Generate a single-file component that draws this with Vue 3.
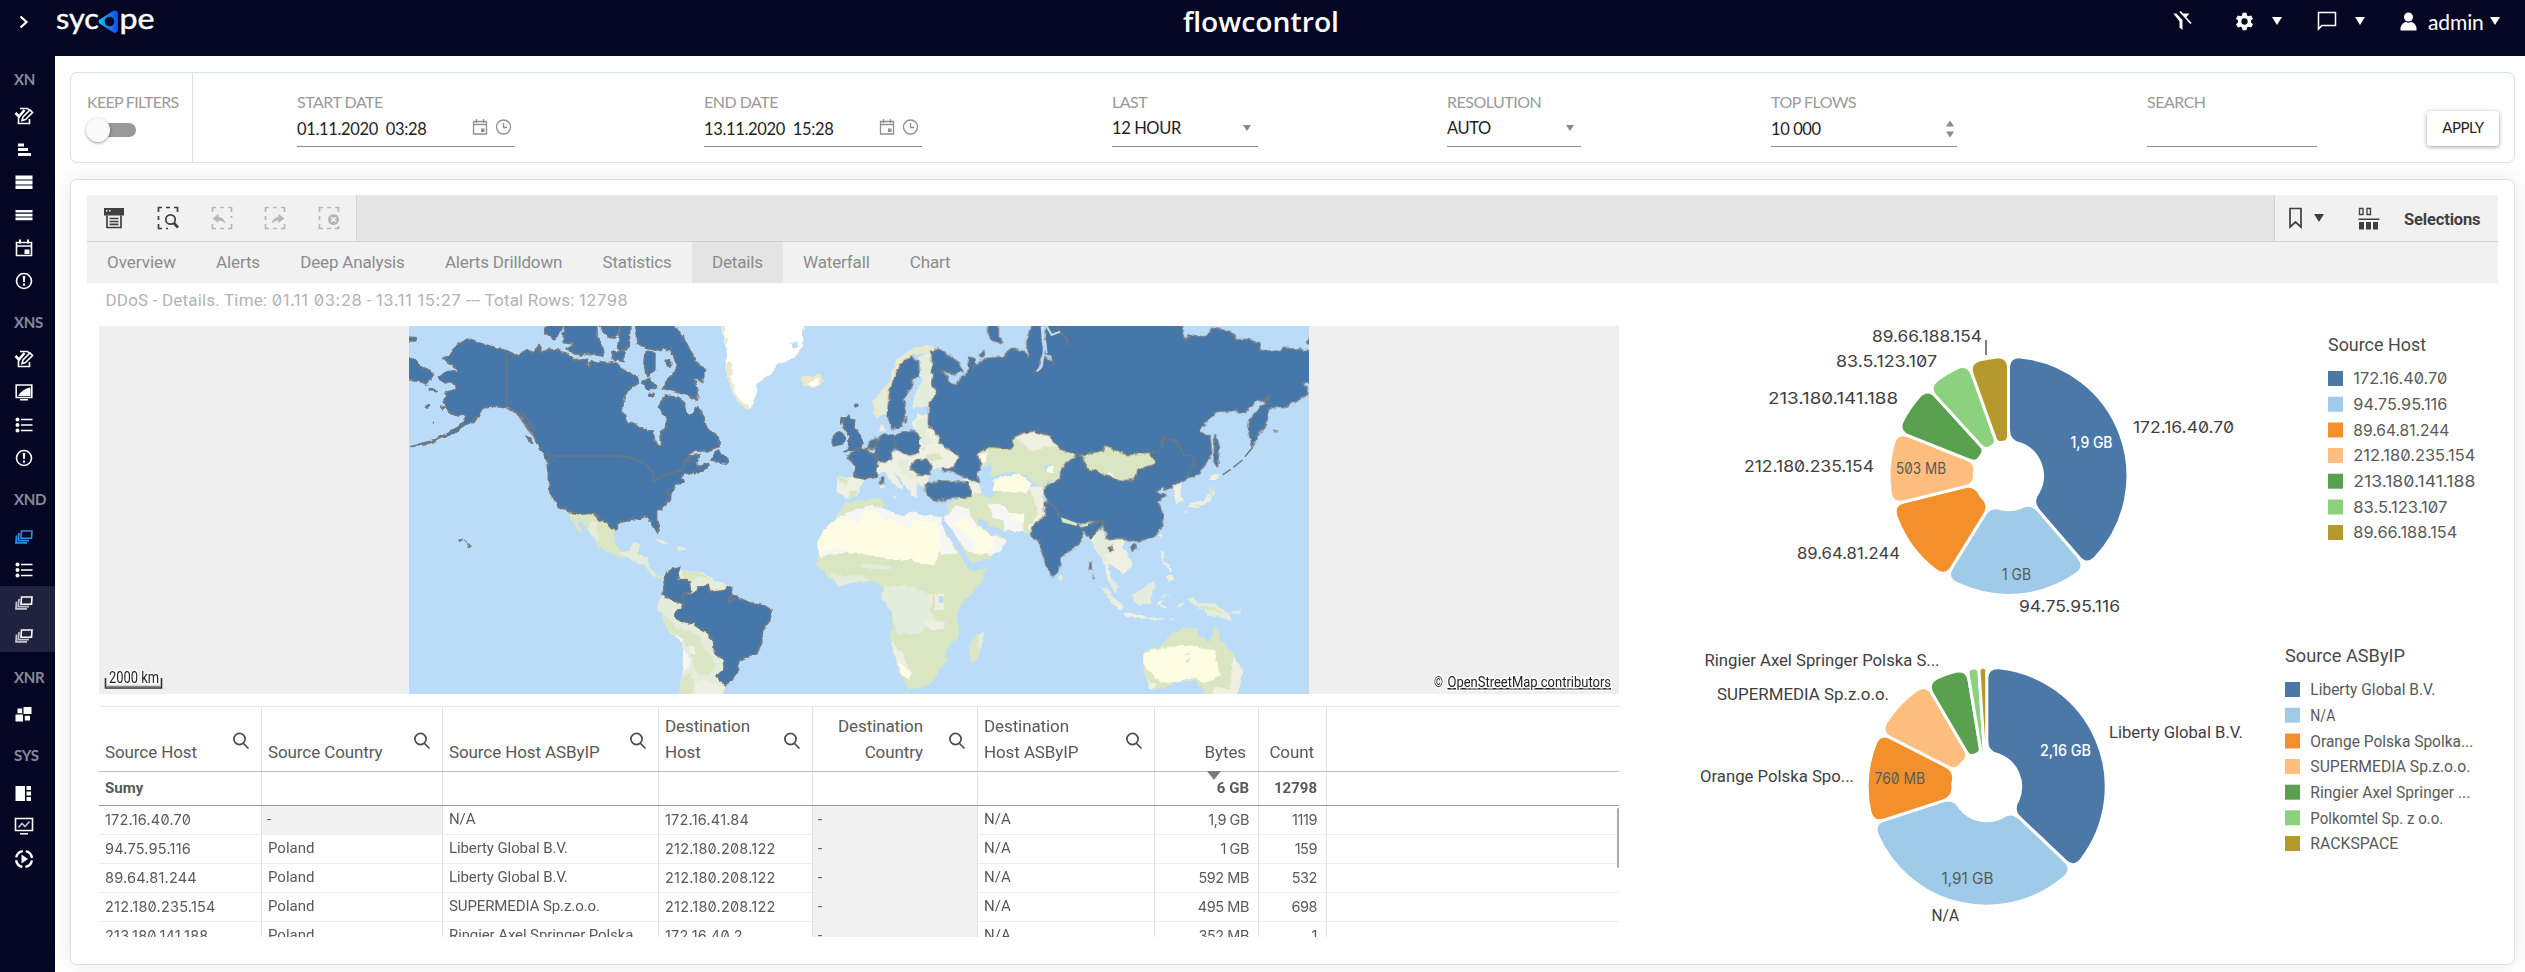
<script setup>
const sections = [
  { label: 'XN', items: ['edit', 'steps', 'rows', 'lines', 'calendar', 'alert'] },
  { label: 'XNS', items: ['edit', 'screen', 'list', 'alert'] },
  { label: 'XND', items: ['stack', 'list', 'stack', 'stack'] },
  { label: 'XNR', items: ['grid'] },
  { label: 'SYS', items: ['panel', 'monitor', 'play'] }
]
const tone = (section, i) => {
  if (section.label !== 'XND') return ''
  if (i === 0) return 'current'
  return i > 1 ? 'marked' : ''
}

const tabs = ['Overview', 'Alerts', 'Deep Analysis', 'Alerts Drilldown', 'Statistics', 'Details', 'Waterfall', 'Chart']

const columns = [
  { lines: ['Source Host'], search: true },
  { lines: ['Source Country'], search: true },
  { lines: ['Source Host ASByIP'], search: true },
  { lines: ['Destination', 'Host'], search: true },
  { lines: ['Destination', 'Country'], search: true, right: true },
  { lines: ['Destination', 'Host ASByIP'], search: true },
  { lines: ['Bytes'], right: true, sorted: true },
  { lines: ['Count'], right: true },
  { lines: [] }
]
const totals = ['Sumy', '', '', '', '', '', '6 GB', '12798', '']
const rows = [
  ['172.16.40.70', '-', 'N/A', '172.16.41.84', '-', 'N/A', '1,9 GB', '1119', ''],
  ['94.75.95.116', 'Poland', 'Liberty Global B.V.', '212.180.208.122', '-', 'N/A', '1 GB', '159', ''],
  ['89.64.81.244', 'Poland', 'Liberty Global B.V.', '212.180.208.122', '-', 'N/A', '592 MB', '532', ''],
  ['212.180.235.154', 'Poland', 'SUPERMEDIA Sp.z.o.o.', '212.180.208.122', '-', 'N/A', '495 MB', '698', ''],
  ['213.180.141.188', 'Poland', 'Ringier Axel Springer Polska', '172.16.40.2', '-', 'N/A', '352 MB', '1', '']
]

const palette = ['#4c78a8', '#9fcae8', '#f4902c', '#ffbe7d', '#59a14e', '#8bd17e', '#b6992d']

// Ring sector with softened corners; angles are in degrees, clockwise from 12 o'clock.
function sector(cx, cy, r0, r1, from, to) {
  const a0 = (from * Math.PI) / 180
  const a1 = (to * Math.PI) / 180
  const span = a1 - a0
  const co = Math.min(12, (span * r1) / 2.1)
  const ci = Math.min(12, (span * r0) / 2.1)
  const p = (r, a) => `${(cx + r * Math.sin(a)).toFixed(1)} ${(cy - r * Math.cos(a)).toFixed(1)}`
  const large = span > Math.PI ? 1 : 0
  return `M${p(r0 + ci, a0)}L${p(r1 - co, a0)}Q${p(r1, a0)} ${p(r1, a0 + co / r1)}` +
    `A${r1} ${r1} 0 ${large} 1 ${p(r1, a1 - co / r1)}Q${p(r1, a1)} ${p(r1 - co, a1)}` +
    `L${p(r0 + ci, a1)}Q${p(r0, a1)} ${p(r0, a1 - ci / r0)}` +
    `A${r0} ${r0} 0 ${large} 0 ${p(r0, a0 + ci / r0)}Q${p(r0, a0)} ${p(r0 + ci, a0)}Z`
}
function sectors(cx, cy, stops) {
  return stops.slice(1).map((to, i) => ({ d: sector(cx, cy, 34, 119.5, stops[i], to), fill: palette[i] }))
}

const charts = [
  {
    title: { t: 'Source Host', x: 2328, y: 351, w: 98 },
    arcs: sectors(2008.5, 475.8, [0, 139.3, 211.8, 256, 291.8, 317.5, 340.3, 360]),
    tick: 'M1986 340V355',
    labels: [
      { t: '89.66.188.154', x: 1872, y: 342, w: 110 },
      { t: '83.5.123.107', x: 1836, y: 367, w: 101 },
      { t: '213.180.141.188', x: 1768, y: 404, w: 130 },
      { t: '212.180.235.154', x: 1744, y: 472, w: 130 },
      { t: '89.64.81.244', x: 1797, y: 559, w: 103 },
      { t: '94.75.95.116', x: 2019, y: 612, w: 101 },
      { t: '172.16.40.70', x: 2133, y: 433, w: 101 }
    ],
    values: [
      { t: '1,9 GB', x: 2070.5, y: 448, w: 42, light: true },
      { t: '503 MB', x: 1896, y: 474, w: 50 },
      { t: '1 GB', x: 2002, y: 580, w: 29 }
    ],
    swatchX: 2328,
    legend: [
      { t: '172.16.40.70', y: 378.5, w: 94 },
      { t: '94.75.95.116', y: 404.2, w: 94 },
      { t: '89.64.81.244', y: 430, w: 96 },
      { t: '212.180.235.154', y: 455.5, w: 122 },
      { t: '213.180.141.188', y: 481.2, w: 122 },
      { t: '83.5.123.107', y: 507, w: 94 },
      { t: '89.66.188.154', y: 532.5, w: 104 }
    ]
  },
  {
    title: { t: 'Source ASByIP', x: 2285, y: 662, w: 120 },
    arcs: sectors(1986.7, 786.7, [0, 133.5, 252, 297, 329.7, 350.6, 356.2, 360]),
    tick: '',
    labels: [
      { t: 'Ringier Axel Springer Polska S...', x: 1704.5, y: 666, w: 235 },
      { t: 'SUPERMEDIA Sp.z.o.o.', x: 1717, y: 700, w: 172 },
      { t: 'Orange Polska Spo...', x: 1700, y: 782, w: 154 },
      { t: 'Liberty Global B.V.', x: 2109, y: 738, w: 134 },
      { t: 'N/A', x: 1931.5, y: 921, w: 27.5 }
    ],
    values: [
      { t: '2,16 GB', x: 2040, y: 756, w: 51, light: true },
      { t: '760 MB', x: 1874.5, y: 784, w: 50.5 },
      { t: '1,91 GB', x: 1941.5, y: 884, w: 52 }
    ],
    swatchX: 2285,
    legend: [
      { t: 'Liberty Global B.V.', y: 689.5, w: 125 },
      { t: 'N/A', y: 715.2, w: 25 },
      { t: 'Orange Polska Spolka...', y: 741, w: 163 },
      { t: 'SUPERMEDIA Sp.z.o.o.', y: 766.5, w: 160 },
      { t: 'Ringier Axel Springer ...', y: 792.2, w: 160 },
      { t: 'Polkomtel Sp. z o.o.', y: 817.8, w: 133 },
      { t: 'RACKSPACE', y: 843.5, w: 88 }
    ]
  }
]
const numeric = (t) => /^[\d.,]+( [GM]B)?$/.test(t)
const address = (t) => /^\d+\.\d+\.\d+\.\d+$/.test(t)
</script>

<template>
  <div class="app">
    <header class="topbar">
      <svg class="chev" width="10" height="14" viewBox="0 0 10 14"><path d="M1.500 1.500L7.500 7L1.500 12.500" /></svg>
      <svg class="logo" width="102" height="40" viewBox="0 0 102 40">
        <defs>
          <linearGradient id="prism" x1="0" x2="1"><stop offset="0" stop-color="#12c4f5" /><stop offset="1" stop-color="#1747f2" /></linearGradient>
        </defs>
        <text x="1" y="21" textLength="43" lengthAdjust="spacingAndGlyphs">syc</text>
        <path d="M44.500 11.500Q42.500 13.500 44.500 15.500L58.500 24.500Q63 25.500 63 21V6Q63 1.500 58.500 2.800Z" fill="url(#prism)" />
        <circle cx="54.500" cy="13.500" r="4.800" fill="#060824" />
        <text x="64.500" y="21" textLength="35" lengthAdjust="spacingAndGlyphs">pe</text>
      </svg>
      <svg class="product" width="160" height="40" viewBox="0 0 160 40"><text x="1" y="26.500" textLength="156" lengthAdjust="spacingAndGlyphs">flowcontrol</text></svg>
      <div class="tools">
        <svg class="t-filter" width="20" height="20" viewBox="0 0 20 20"><path d="M.500 2.500H3.500L9.500 9V12V19L6.500 16.500V10.500ZM9 2.500H16.500L12.500 7Z" fill="#fff" /><path d="M7 .500L18 12.500" stroke="#fff" stroke-width="1.700" /></svg>
        <svg class="t-gear" width="19" height="19" viewBox="0 0 24 24"><path fill="#fff" fill-rule="evenodd" d="M9.500 1h5l.6 3.300 2 1.200 3.200-1.200 2.500 4.300-2.600 2.200v2.400l2.600 2.200-2.500 4.300-3.200-1.200-2 1.200-.6 3.300h-5l-.6-3.300-2-1.200-3.200 1.200-2.500-4.300 2.600-2.200v-2.400L1.200 8.600l2.500-4.300 3.200 1.200 2-1.200ZM12 8a4 4 0 1 0 0 8a4 4 0 1 0 0-8Z" /></svg>
        <i class="down a1"></i>
        <svg class="t-chat" width="20" height="20" viewBox="0 0 20 20"><path d="M1.500 18V1.500H18.500V14.500H4.800Z" fill="none" stroke="#fff" stroke-width="1.500" /></svg>
        <i class="down a2"></i>
        <svg class="t-user" width="17" height="19" viewBox="0 0 17 19"><circle cx="8.500" cy="5" r="4.500" fill="#fff" /><path d="M.500 18.500V15.500Q2 10.500 6 10Q8.500 11.500 11 10Q15 10.500 16.500 15.500V18.500Z" fill="#fff" /></svg>
        <span class="user">admin</span>
        <i class="down a3"></i>
      </div>
    </header>

    <div class="body">
      <nav class="side">
        <section v-for="s in sections" :key="s.label">
          <h6>{{ s.label }}</h6>
          <div v-for="(icon, i) in s.items" :key="i" class="nav" :class="tone(s, i)">
            <svg width="20" height="20" viewBox="0 0 20 20">
              <g v-if="icon === 'edit'" class="ln"><path d="M4.500 11.500V17.500H15.500V13M6 2.500H13.500L15 4" /><path d="M1.500 7L5 10.500L10.500 4" class="fat" /><path d="M8 14.500L9 11L16 4L18.500 6.500L11.500 13.500Z" /></g>
              <g v-else-if="icon === 'steps'"><path d="M4 4.500h6v3H4zM4 9h10v3H4zM4 14h13v3H4z" /></g>
              <g v-else-if="icon === 'rows'"><path d="M1.500 3.500h17v4h-17zM1.500 8.500h17v4h-17zM1.500 13.500h17v3.500h-17z" /></g>
              <g v-else-if="icon === 'lines'"><path d="M1.500 5h17v2.600h-17zM1.500 8.800h17v2.600h-17zM1.500 12.600h17v2.600h-17z" /></g>
              <g v-else-if="icon === 'calendar'"><path d="M2.500 4.500H17.500V17.500H2.500ZM2.500 8H17.500" class="ln" /><path d="M5 1.500h2v4H5zM13 1.500h2v4h-2zM10.500 11.500h5V16h-5z" /></g>
              <g v-else-if="icon === 'alert'"><circle cx="10" cy="10" r="7.500" class="ln" /><path d="M8.700 5h2.600l-.5 6h-1.600zM8.900 12.600h2.200v2.200H8.900z" /></g>
              <g v-else-if="icon === 'screen'"><path d="M2.200 3H17.800V15.500H2.200Z" class="ln" /><path d="M4 14Q8 7 16.500 5.500V14ZM6 17h8v1.500H6z" /></g>
              <g v-else-if="icon === 'list'"><circle cx="3.500" cy="4.500" r="2" /><circle cx="3.500" cy="10" r="2" /><circle cx="3.500" cy="15.500" r="2" /><path d="M7 3.800h11.500v1.500H7zM7 9.300h11.500v1.500H7zM7 14.800h11.500v1.500H7z" /></g>
              <g v-else-if="icon === 'stack'" class="ln"><path d="M7.500 4H18L17.500 11.300H7Z" /><path d="M5 6L4.300 13.600H15M2.500 8.500L2 15.800H13" class="thin" /></g>
              <g v-else-if="icon === 'grid'"><path d="M3.500 4.500h4.700v4.700H3.500zM9.500 3h8v7h-8zM1.500 10.500H9v7H1.500zM10.800 11.700H16v4.800h-5.200z" /></g>
              <g v-else-if="icon === 'panel'"><path d="M1.500 3h9.500v15H1.500zM12.500 3h4.500v4h-4.500zM12.500 8.500h4.500v4h-4.500zM12.500 14h4.500v4h-4.500z" /></g>
              <g v-else-if="icon === 'monitor'" class="ln"><path d="M1.500 2.500H18.500V14.500H1.500ZM6 17.700H14" /><path d="M4.500 11.500L8 7.500L11 10.500L15.500 5.500" class="thin" /></g>
              <g v-else><circle cx="10" cy="10" r="8" class="ln dash" /><path d="M7.500 5.500L14 10L7.500 14.500Z" /></g>
            </svg>
          </div>
        </section>
      </nav>

      <main class="content">
        <section class="card filters">
          <div class="keep"><label>KEEP FILTERS</label><span class="toggle"><i></i></span></div>
          <div class="field w-date"><label>START DATE</label>
            <div class="value">01.11.2020&nbsp; 03:28
              <svg class="dt" width="40" height="18" viewBox="0 0 40 18"><path d="M1.500 3.500H14.500V16H1.500ZM1.500 6.500H14.500M4.500 1V5M11.500 1V5" /><path d="M9 10.500h3.500V14H9z" class="fill" /><circle cx="31.500" cy="9" r="7" /><path d="M31.500 5V9.500H35" /></svg>
            </div>
          </div>
          <div class="field w-date"><label>END DATE</label>
            <div class="value">13.11.2020&nbsp; 15:28
              <svg class="dt" width="40" height="18" viewBox="0 0 40 18"><path d="M1.500 3.500H14.500V16H1.500ZM1.500 6.500H14.500M4.500 1V5M11.500 1V5" /><path d="M9 10.500h3.500V14H9z" class="fill" /><circle cx="31.500" cy="9" r="7" /><path d="M31.500 5V9.500H35" /></svg>
            </div>
          </div>
          <div class="field w-last"><label>LAST</label><div class="value up">12 HOUR<i class="down small"></i></div></div>
          <div class="field w-res"><label>RESOLUTION</label><div class="value up">AUTO<i class="down small"></i></div></div>
          <div class="field w-top"><label>TOP FLOWS</label>
            <div class="value">10 000<svg class="spin" width="10" height="18" viewBox="0 0 10 18"><path d="M1 6.500L5 .500L9 6.500ZM1 11.500L5 17.500L9 11.500Z" /></svg></div>
          </div>
          <div class="field w-search"><label>SEARCH</label><div class="value"></div></div>
          <button class="apply">APPLY</button>
        </section>

        <section class="card board">
          <div class="toolbar">
            <div class="group first">
              <svg width="24" height="24" viewBox="0 0 24 24"><path d="M2 2h20v7.500h-20z" class="dk" /><path d="M4 4h1.500v1.500H4zM7 4h1.500v1.500H7z" fill="#f1f1f1" /><path d="M5 9.500V21.500H19V9.500M7.500 12.500H16.500M7.500 15.500H16.500M7.500 18.300H16.500" class="st" /></svg>
              <svg width="24" height="24" viewBox="0 0 24 24"><path d="M2.500 6V1.500H6M10 1.500H14M18 1.500H21.500V6M2.500 10V14M2.500 18V22.500H6M10 22.500h2" class="st" /><circle cx="14.500" cy="13.500" r="4.700" class="st" /><path d="M17.800 17L22 21.500" class="st wide" /></svg>
              <svg class="off" width="24" height="24" viewBox="0 0 24 24"><path d="M2.500 6V1.500H6M10 1.500H14M18 1.500H21.500V6M2.500 18V22.500H6M10 22.500H14M18 22.500H21.500V18M21.500 10V12" class="st" /><path d="M2.500 12.500L8.500 8V11Q14 11.500 15.500 17.500Q12.500 14.500 8.500 14.500V17Z" class="dk" /></svg>
              <svg class="off" width="24" height="24" viewBox="0 0 24 24"><path d="M2.500 6V1.500H6M10 1.500H14M18 1.500H21.500V6M2.500 18V22.500H6M10 22.500H14M18 22.500H21.500V18M2.500 10V14" class="st" /><path d="M21.500 12.500L15.500 8V11Q10 11.500 8.500 17.500Q11.500 14.500 15.500 14.500V17Z" class="dk" /></svg>
              <svg class="off" width="24" height="24" viewBox="0 0 24 24"><path d="M2.500 6V1.500H6M10 1.500H14M18 1.500H21.500V6M2.500 10V14M2.500 18V22.500H6M10 22.500H14M18 22.500H21.500V20" class="st" /><circle cx="16.500" cy="13.500" r="5.500" class="dk" /><path d="M14.300 11.300L18.700 15.700M18.700 11.300L14.300 15.700" stroke="#f1f1f1" stroke-width="1.800" /></svg>
            </div>
            <div class="group last">
              <svg class="bm" width="16" height="22" viewBox="0 0 16 22"><path d="M2 1.500H13V20L7.500 15L2 20Z" class="st" /></svg>
              <i class="down dark"></i>
              <svg class="sel" width="24" height="24" viewBox="0 0 24 24"><path d="M2.500 2.500H6V8.500H2.500ZM10 2.500H13.500V8.500H10Z" class="st thin" /><path d="M1.500 12.500h21v1.500h-21zM2 16h5v7.500H2zM9 16h5v7.500H9zM16 16h5v7.500h-5z" class="dk" /></svg>
              <b>Selections</b>
            </div>
          </div>
          <div class="tabs"><span v-for="t in tabs" :key="t" :class="{ on: t === 'Details' }">{{ t }}</span></div>
          <p class="caption">DDoS - Details. Time: <span>01.11 03:28</span> - <span>13.11 15:27</span> --- Total Rows: <span>12798</span></p>

          <div class="split">
            <div class="data">
              <svg class="map" width="1520" height="368" viewBox="99 326 1520 368">
                <defs>
                  <clipPath id="tiles"><rect x="409" y="326" width="900" height="368" /></clipPath>
                  <filter id="coast" x="-5%" y="-5%" width="110%" height="110%"><feTurbulence type="fractalNoise" baseFrequency="0.160" numOctaves="2" seed="4" /><feDisplacementMap in="SourceGraphic" scale="5" xChannelSelector="R" yChannelSelector="G" /></filter>
                </defs>
                <rect x="99" y="326" width="1520" height="368" fill="#efefef" />
                <g clip-path="url(#tiles)">
                  <rect x="409" y="326" width="900" height="368" fill="#badcf8" />
                  <g filter="url(#coast)">
                    <g transform="translate(400 320) scale(.3333)">
                      <path class="ice" d="M968 10H1212L1205 80L1185 115L1135 130L1110 165L1072 190L1070 220L1050 268L1020 252L1000 220L980 170L975 130L985 100L970 60Z" />
                      <path class="sand" d="M960 15L975 20L975 50L985 60L982 75L972 65ZM975 130L990 122L1000 160L992 168L1002 215L1025 245L1050 262L1048 268L1020 254L1000 220L980 170ZM1200 168L1215 172L1260 162L1273 185L1240 205L1215 198Z" />
                      <path fill="#badcf8" d="M1168 72L1190 65L1200 80L1180 82Z" />
                      <path fill="#fff" d="M1225 188L1255 178L1258 192L1235 200Z" />
                      <path class="veg" d="M500 573L540 583L580 580L598 600L613 598L632 625L647 630L645 665L660 692L690 692L700 670L720 668L715 705L745 712L750 745L770 765L790 768L785 775L765 772L740 755L735 740L690 718L650 708L590 680L585 655L555 622L530 590L548 640L535 635L515 600Z" />
                      <path class="pale" d="M570 600L595 605L590 640L600 660L590 665L565 630ZM655 695L690 692L700 670L720 668L715 705L745 712L750 745L770 765L765 772L735 740L690 718Z" />
                      <path class="pale" d="M760 656L785 660L810 674L795 676L775 664ZM832 682H852L860 690H835ZM875 690h6v4h-6z" />
                      <path class="pale" d="M838 750L880 755L910 758L940 780L985 795L968 815L930 815L925 795L890 805L880 823L870 815L868 783L835 775Z" />
                      <path class="veg" d="M845 752L905 760L925 778L900 772L880 785L850 770Z" />
                      <path class="pale" d="M785 822L825 845L850 850L822 885L850 912L885 905L922 935L940 955L943 1000L970 1020L972 1045L948 1068L977 1098L960 1135H835L845 1070L850 1000L848 965L810 940L790 895L770 865Z" />
                      <path class="veg" d="M775 870L800 890L830 925L865 930L900 950L905 975L925 1000L950 1030L935 1060L905 1070L885 1050L870 990L850 960L810 935L790 895ZM835 1125L848 1070L870 1060L885 1090L870 1130Z" />
                      <path class="snow" d="M850 990L868 1010L870 1040L850 1055ZM830 945L855 960L845 970Z" />
                      <path class="sandy" d="M862 975L885 980L890 1000L870 1000ZM885 1085L920 1080L970 1105L960 1130H885Z" />
                      <path class="sandy" d="M1312 470L1365 472L1400 478L1380 500L1370 525L1340 540L1310 515Z" />
                      <path class="veg" d="M1312 472L1345 474L1340 490L1320 490ZM1350 515L1372 510L1366 528L1345 535Z" />
                    </g>
                    <g transform="translate(860 320) scale(.3333)">
                      <path class="veg" d="M-45 548L-20 545L0 540L70 533L75 550L70 565L95 575L130 590L150 575L200 585L240 590L250 620L270 660L300 700L320 745L345 752L378 745L370 780L330 825L300 855L290 890L298 950L262 985L260 1020L240 1050L215 1090L180 1103L145 1108L125 1070L110 1020L88 960L98 920L95 880L68 840L65 800L40 783L0 785L-65 797L-100 765L-130 735L-125 700L-130 665L-105 625L-75 595Z" />
                      <path class="snow" d="M-128 665L-105 625L-75 598L-30 575L20 558L70 560L95 575L130 590L150 575L200 585L240 592L250 620L270 660L290 700L245 705L240 690L-60 700L-120 710Z" />
                      <path class="cream" d="M-128 668L-100 620L-70 600L0 605L15 570L50 570L70 605L100 600L150 630L160 600L230 605L245 690L220 735L180 730L150 720L90 720L0 700L-60 685L-125 695Z" />
                      <path class="pale" d="M70 800L110 795L160 800L220 825L210 880L230 900L190 930L170 945L110 940L95 880L68 840ZM-95 755L-50 770L0 765L40 783L0 785L-65 797ZM0 735L80 735L100 750L20 745Z" />
                      <path class="sandy" d="M225 825L255 820L250 870L225 870ZM190 900L255 905L250 930L200 925ZM90 960L110 1020L125 1070L155 1060L115 985Z" />
                      <path class="cream" d="M115 1025L155 1060L145 1080L125 1060Z" />
                      <path fill="#badcf8" d="M232 832L252 830L250 848L238 850Z" />
                      <path class="veg" d="M373 930L368 965L350 1025L330 1025L328 995L335 955L355 945Z" />
                      <path class="pale" d="M373 930L368 965L355 990L348 975L358 945Z" />
                      <path class="veg" d="M262 585L265 545L330 530L350 510L370 520L390 535L410 515L470 500L550 500L550 550L555 590L520 640L500 637L430 630L420 625L380 615L350 590L360 625L400 635L442 660L420 695L365 720L325 735L300 680L250 605Z" />
                      <path class="snow" d="M250 600L290 555L325 570L335 600L380 640L442 660L420 695L400 705L345 700L300 680L270 635ZM385 555L420 548L450 580L490 585L490 635L435 632L430 600L400 595Z" />
                      <path class="cream" d="M275 610L320 590L345 625L400 640L400 690L365 700L335 695L350 665L315 640ZM400 480L480 460L515 490L500 520L440 515L400 515ZM450 590L490 580L490 605L455 600Z" />
                      <path class="veg" d="M290 650L325 705L365 705L325 735L300 690ZM350 400L385 380L460 380L460 350L520 332L575 350L595 385L648 405L600 450L590 480L550 500L520 490L500 465L440 455L400 470L370 440Z" />
                      <path class="sandy" d="M350 400L380 400L378 430L355 425ZM455 350L520 332L575 350L595 385L550 375L545 390L510 390L485 370ZM505 500L550 500L550 550L555 590L520 640L505 620L535 580L525 545ZM300 470L360 490L365 520L335 520L325 488Z" />
                      <path class="cream" d="M555 440L585 438L582 455L560 455ZM352 408L378 405L375 430Z" />
                      <path fill="#badcf8" d="M367 445L395 435L398 450L383 470L405 520L390 535L368 525L372 490ZM550 442L570 432L575 438L552 446ZM555 485L580 478L578 485Z" />
                      <path fill="#badcf8" d="M355 595L375 600L400 630L425 630L430 645L395 645L365 620ZM215 470L240 450L300 470L325 488L245 483L215 490Z" />
                      <path class="veg" d="M660 405L735 378L800 400L868 398L890 430L835 450L825 480L780 483L720 460L680 445Z" />
                      <path class="snow" d="M715 462L735 465L755 460L762 468L740 475Z" />
                      <path class="sandy" d="M668 640L690 655L720 620L740 655L795 655L790 685L815 720L812 745L790 762L770 745L745 735L750 765L775 800L770 820L750 795L738 760L735 730L715 700L700 670Z" />
                      <path class="pale" d="M720 620L740 655L770 660L760 690L735 700L740 730L715 700L700 670ZM750 765L775 800L770 820L750 795ZM600 765L610 775L602 785L595 775Z" />
                      <path class="pale" d="M715 795L745 810L790 860L785 872L760 855L735 820ZM815 825L850 805L880 783L885 800L870 850L830 855ZM980 835L1000 835L1010 850L1040 845L1080 860L1105 880L1120 905L1080 890L1040 890L1035 870L1000 855ZM1112 875L1132 873L1142 865L1137 879L1119 881Z" />
                      <path class="sandy" d="M760 840L790 862L785 872L765 858ZM790 878L845 885L870 898L800 888ZM890 845L915 840L900 852L920 862L908 865L896 855L891 865ZM902 695L912 700V720L934 745V755L909 730ZM915 770L940 765L942 783L930 785ZM898 640L908 638L905 655ZM870 895h40v4h-40zM925 900l18-5v5l-16 5zM900 826h32v3h-32zM955 853h14v4h-14z" />
                      <path class="veg" d="M1010 852L1060 862L1090 880L1040 870ZM850 1005L860 990L905 980L930 945L980 920L1015 928L1015 945L1050 970L1065 915L1085 960L1120 1000L1147 1050L1130 1130L1040 1130L1025 1105L1000 1080L960 1085L910 1105L865 1105L850 1050Z" />
                      <path class="cream" d="M850 1005L865 992L915 985L940 978L1000 978L1030 988L1065 990L1070 1030L1080 1065L1040 1090L1000 1075L960 1085L905 1090L870 1055L850 1035Z" />
                      <path class="veg" d="M975 1022L995 1015L985 1030ZM972 998h18v5h-18z" />
                      <path class="sandy" d="M1120 1010L1147 1050L1130 1130H1045L1070 1100L1110 1110ZM865 1080L885 1095V1105H865Z" />
                      <path class="sandy" d="M1055 500L1062 520L1050 545L1015 560L985 565L990 550L1030 540L1045 525ZM1060 462L1085 465L1065 480L1048 480ZM972 567L984 570L978 582ZM935 495L965 490L962 510L968 545L950 552L945 525Z" />
                      <path class="veg" d="M1048 505L1060 505L1058 525L1048 535ZM995 555L1020 548L1015 558Z" />
                      <path class="beige" d="M40 240L85 190L110 120L150 90L215 75L225 90L190 100L150 105L120 140L90 200L85 280L50 295L40 270Z" />
                      <path class="pale" d="M178 110L215 95L218 190L230 220L208 258L160 265L160 225L185 190ZM45 245L75 215L85 280L60 285Z" />
                      <path class="sandy" d="M62 312L74 317L76 337L58 335ZM155 310L175 280L205 285L210 310L235 345L240 370L295 405L285 445L215 445L208 420L210 465L195 500L170 490L170 535L150 520L125 480L95 450L130 500L125 510L90 480L75 455L55 460L45 430L95 420L95 392L150 405L178 390L175 345ZM60 495h10v10h-10zM95 525l15 2-5 5z" />
                      <path class="pale" d="M160 305L200 290L208 325L190 345L225 370L190 375L175 340ZM110 415L150 420L140 440L160 470L150 480L115 440Z" />
                      <path class="veg" d="M195 410L235 395L245 420L215 425ZM180 380L200 385L190 395Z" />
                    </g>
                  </g>
                  <g filter="url(#coast)" class="blue">
                    <g transform="translate(400 320) scale(.3333)">
                      <path d="M128 118L150 105L165 80L203 57L235 68L270 78L320 92L355 108L385 90L400 100L417 75L425 98L445 88L470 90L500 100L520 122L560 118L568 145L575 122L610 130L635 125L650 130L670 150L700 165L718 175L715 190L690 205L672 235L667 275L685 305L715 318L740 330L760 333L762 360L778 380L785 375L782 335L800 320L800 295L785 275L775 262L795 225L825 228L850 245L857 275L870 288L885 275L893 260L910 290L920 325L955 352L958 380L930 392L880 394L852 425L868 412L890 402L900 405L890 425L895 440L925 430L928 440L885 463L882 455L850 463L845 478L850 488L825 497L810 520L808 545L770 578L770 600L777 620L772 637L760 620L752 598L735 590L705 600L695 597L665 603L650 615L647 630L632 625L613 598L598 600L580 580L540 583L500 573L475 557L450 518L445 480L445 420L425 395L408 365L390 330L365 290L335 268L315 263L275 258L250 262L235 285L205 310L170 335L130 352L105 365L70 372L35 380L60 372L110 358L150 335L180 318L198 290L170 282L150 283L140 262L132 240L140 215L170 207L165 190L130 188L118 172L135 158L173 155L160 135Z" />
                      <path d="M433 40L445 10H492L480 40L462 58L450 45ZM490 45L495 10H590L592 50L605 75L610 110L575 100L540 108L495 85L520 72L490 68ZM595 10H655V45L640 55L610 40ZM660 10H690L688 80L665 95L652 85L660 40ZM703 10H815L850 50L870 90L885 120L917 150L905 185L880 175L895 210L893 240L860 225L825 215L790 205L795 185L830 150L825 110L800 85L770 90L735 85L712 70ZM735 95L765 100L765 150L740 170L732 130ZM635 95H672V125L640 118ZM725 185L745 175L770 205L745 210ZM750 218L762 222L758 230L749 228ZM795 120L812 122L812 138L798 138Z" />
                      <path d="M935 420L955 390L962 402L980 412L982 430L955 425ZM20 105L75 145L103 162L80 192L50 180L20 180ZM20 50L46 53L44 63H20ZM88 205l22 6-4 4-18-4zM78 257h8v4h-8zM122 258l14 3-8 6zM218 295l16-8-8 20-10 2zM378 345L392 355L395 370L386 360ZM175 659h8v4h-8zM192 664l8 6M204 671l10 10-8 2zM98 305l7 6" />
                      <path d="M1335 290L1352 285L1350 300L1365 300L1362 320L1378 345L1390 368L1380 388L1335 395L1350 380L1340 365L1352 350L1335 330L1330 310ZM1300 348L1322 335L1335 350L1328 372L1300 378ZM1368 252l4 6-5 6zM1324 292l8-4-4 20-6 0zM1343 410L1365 412L1375 395L1395 385L1415 400L1440 410L1430 430L1428 470L1400 478L1365 472L1367 440Z" />
                      <path d="M840 738L832 770L838 778L868 783L872 815L852 820L850 850L825 845L785 820L797 795L793 772L815 748ZM852 820L875 823L893 812L890 800L905 802L925 793L930 817L968 812L990 798L1002 828L1050 848L1085 852L1113 870L1115 895L1088 930L1085 970L1067 1003L1035 1010L1015 1028L1012 1055L990 1085L977 1098L948 1068L972 1045L970 1020L943 1000L940 955L925 950L922 935L885 920L885 905L850 912L822 885L850 855ZM985 840L1000 825L1010 832L990 845Z" />
                    </g>
                    <g transform="translate(860 320) scale(.3333)">
                      <path d="M215 95L238 88L300 130L305 155L280 163L240 148L262 170L265 190L290 195L300 175L330 150L325 115L345 118V135L385 115L435 110L450 85L490 95L510 120L500 70L515 10L542 10L548 100L530 155L518 152L540 150L555 110L580 130L575 105L553 100L558 10L960 10L980 65L985 45L1020 50L1045 45L1055 25L1110 35L1130 60L1165 58L1198 72L1200 92L1260 95L1275 85L1320 88L1360 100V185L1325 187L1342 205L1340 225L1275 262L1240 262L1225 270L1220 310L1190 350L1178 382L1165 330L1170 300L1195 270L1230 228L1220 245L1195 237L1180 250L1155 278L1120 272L1065 275L1040 305L1018 335L1050 350L1055 400L1020 460L985 475L980 440L1005 418L970 400L945 360L910 355L895 395L868 400L800 403L735 378L730 390L655 405L595 385L575 348L520 332L460 350L455 385L385 380L350 400L365 435L350 455L358 487L330 475L275 455L245 450L285 445L295 405L240 370L235 345L205 310L208 255L230 220L218 190L217 130Z" />
                      <path d="M650 405L620 430L600 455L598 480L555 500L553 520L565 545L585 560L595 590L640 612L700 605L725 600L735 620L740 655L795 655L825 665L880 652L905 620L912 595L893 545L915 525L885 515L910 498L915 510L980 475L1005 418L970 400L945 360L910 355L895 395L868 400L890 430L835 450L825 480L780 483L720 460L680 445L660 405Z" />
                      <path d="M565 545L585 560L600 595L655 618L665 625L720 600L730 615L705 640L690 655L668 630L665 660L640 685L600 712L597 755L577 768L560 740L545 690L540 665L512 645L525 610L555 590L553 552ZM812 682L827 674L829 686L817 691ZM748 682l8-4v12l-6 2zM690 730l5-2-2 20-5 2zM697 765l6 14M1065 345L1078 380L1072 440L1062 435ZM360 98l12-4 3 10-8 7-8-5zM388 10H415V50L428 72L395 60L382 40ZM1340 60L1350 50V68H1340ZM245 443L265 450L252 458ZM62 475l8-4v16l-7 2zM133 298l8-4-4 12zM1240 330l14 6" />
                      <path d="M150 108L175 122L177 165L155 180V205L128 235L138 270L122 318L98 328L82 285L90 210L105 170L125 130ZM45 375L65 345L105 345L103 385L92 395L95 420L62 425L50 410ZM20 385L35 358L52 352L45 385ZM105 345L165 332L178 350L176 398L150 405L105 390ZM150 440L170 420L200 418L215 440L210 463L170 462ZM195 490L245 483L325 488L333 528L270 535L230 540L203 530ZM-37 410L-5 385L20 390L45 412L52 430L48 470L20 475L-15 472L-13 440Z" />
                    </g>
                  </g>
                  <g class="border">
                    <path transform="translate(400 320) scale(.3333)" d="M320 92V263L352 280L385 330L398 345M458 408H665L710 418L740 435L760 460L758 485L785 468L850 447L855 425L880 418M352 275L372 310L392 335M360 270L388 305L404 335M440 395L460 425M800 510L808 530" />
                    <path transform="translate(860 320) scale(.3333)" d="M565 30L600 40L622 55L620 80M585 10L610 45M1178 382L1155 410M1148 420L1120 442M1112 448L1088 465" />
                  </g>
                  <path transform="translate(860 320) scale(.3333)" d="M603 592L652 610L650 618L607 607ZM668 612L684 610L684 618L668 620Z" class="veg" />
                  <path transform="translate(860 320) scale(.3333)" d="M558 15L575 45L600 35M555 60L560 100M545 20L552 90L545 140L530 155" class="strait" />
                  <path transform="translate(860 320) scale(.3333)" d="M247 605L272 635L300 685L322 725L345 742" class="strait sea" />
                </g>
                <text class="scale" x="109" y="683" textLength="50" lengthAdjust="spacingAndGlyphs">2000 km</text>
                <path d="M105.500 678V688H161.500V678" class="bar" />
                <path d="M106.500 686.500H160.500" class="bar2" />
                <text class="osm" x="1434" y="687" textLength="9" lengthAdjust="spacingAndGlyphs">©</text>
                <text class="osm link" x="1447.500" y="687" textLength="163.500" lengthAdjust="spacingAndGlyphs">OpenStreetMap contributors</text>
              </svg>

              <div class="table">
                <div class="tr head">
                  <div v-for="(c, i) in columns" :key="i" class="td" :class="{ end: c.right, plain: !c.search }">
                    <span class="names"><span v-for="l in c.lines" :key="l">{{ l }}</span></span>
                    <svg v-if="c.search" class="mag" width="18" height="18" viewBox="0 0 18 18"><circle cx="7.500" cy="7" r="5.600" /><path d="M11.500 11.500L16.500 16.500" /></svg>
                    <i v-if="c.sorted" class="sort"></i>
                  </div>
                </div>
                <div class="tr total"><div v-for="(t, i) in totals" :key="i" class="td" :class="{ end: i > 5 }">{{ t }}</div></div>
                <div class="rows">
                  <div v-for="(r, k) in rows" :key="k" class="tr row">
                    <div v-for="(t, i) in r" :key="i" class="td" :class="{ end: i > 5, num: numeric(t), ip: address(t), none: t === '-', wide: i === 2 }">{{ t }}</div>
                  </div>
                  <i class="thumb"></i>
                </div>
              </div>
            </div>

            <svg class="donuts" width="878" height="640" viewBox="1619 320 878 640">
              <g v-for="c in charts" :key="c.title.t">
                <path v-for="a in c.arcs" :key="a.d" :d="a.d" :fill="a.fill" stroke="#fff" stroke-width="3" />
                <path v-if="c.tick" :d="c.tick" stroke="#404040" stroke-width="1.300" />
                <text v-for="l in c.labels" :key="l.t" class="lab" :class="{ num: numeric(l.t) }" :x="l.x" :y="l.y" :textLength="l.w" lengthAdjust="spacingAndGlyphs">{{ l.t }}</text>
                <text v-for="v in c.values" :key="v.t" class="val num" :class="{ light: v.light }" :x="v.x" :y="v.y" :textLength="v.w" lengthAdjust="spacingAndGlyphs">{{ v.t }}</text>
                <text class="ttl" :x="c.title.x" :y="c.title.y" :textLength="c.title.w" lengthAdjust="spacingAndGlyphs">{{ c.title.t }}</text>
                <g v-for="(l, i) in c.legend" :key="l.t">
                  <rect :x="c.swatchX" :y="l.y - 7.5" width="15" height="15" :fill="palette[i]" />
                  <text class="leg" :class="{ num: numeric(l.t) }" :x="c.swatchX + 25.3" :y="l.y + 5.8" :textLength="l.w" lengthAdjust="spacingAndGlyphs">{{ l.t }}</text>
                </g>
              </g>
            </svg>
          </div>
        </section>
      </main>
    </div>
  </div>
</template>

<style>
body { margin: 0; background: #fff; overflow: hidden; }
</style>

<style scoped>
* { box-sizing: border-box; }
.app { width: 2525px; height: 972px; overflow: hidden; font-family: Lato, "Open Sans", sans-serif; display: flex; flex-direction: column; background: #fff; }
.topbar { height: 56px; flex: none; background: #050623; display: grid; grid-template-columns: 55px 1127px 991px 1fr; color: #fff; padding-top: 8px; }
.chev { margin: 7px 0 0 19px; }
.chev path { fill: none; stroke: #fff; stroke-width: 2.2; }
.logo, .product { overflow: visible; }
.logo text { font: 28px Lato, sans-serif; fill: #fff; stroke: #fff; stroke-width: .4; }
.product { margin-top: -3px; }
.product text { font: 600 27px "Open Sans", sans-serif; fill: #fff; }
.tools { display: flex; height: 26px; align-items: center; }
.t-gear { margin-left: 42px; }
.t-chat { margin-left: 34.5px; }
.t-user { margin-left: 34.500px; }
.user { font-size: 21px; line-height: 26px; margin: 2px 0 0 11.500px; width: 52px; letter-spacing: -.1px; }
.down { width: 0; height: 0; border-left: 5.5px solid transparent; border-right: 5.5px solid transparent; border-top: 8px solid #fff; display: block; }
.a1 { margin-left: 18px; }
.a2 { margin-left: 18.500px; }
.a3 { margin-left: 9.500px; }

.body { display: flex; flex: 1; }
.side { width: 55px; flex: none; background: #050623; }
.side h6 { margin: 0; height: 45.600px; padding: 15.5px 0 0 14px; font-size: 15px; line-height: 18px; font-weight: 700; color: #888a9b; letter-spacing: -.3px; }
.side section:first-child h6 { height: 43px; padding-top: 14px; }
.nav { height: 33px; padding-left: 13.5px; display: flex; align-items: center; }
.nav svg { fill: #fff; stroke: none; display: block; }
.nav .ln, .nav .ln path { fill: none; stroke: #fff; stroke-width: 1.6; }
.nav .ln .fat { stroke-width: 2.6; }
.nav .ln .thin { stroke-width: 1.7; stroke: #c3c4d0; }
.nav .dash { stroke-width: 2.4; stroke-dasharray: 9.6 3; stroke-dashoffset: -1.5; }
.current .ln path, .current .ln .thin { stroke: #2f8fdc; }
.marked { background: #21223e; }

.content { flex: 1; padding: 16px 10px 7px 15px; display: flex; flex-direction: column; gap: 16px; min-width: 0; }
.card { border: 1px solid #d9e0e7; border-radius: 7px; background: #fff; }
.filters { height: 91px; flex: none; display: grid; grid-template-columns: 226px 407px 408px 335px 324px 376px 280px 72px; position: relative; z-index: 1; }
.keep { width: 122px; border-right: 1px solid #d9e0e7; padding: 19px 0 0 16px; }
label { display: block; font-size: 16px; line-height: 20px; color: #9a9a9a; letter-spacing: -.5px; white-space: nowrap; }
.keep label { letter-spacing: -.7px; }
.toggle { display: block; width: 36px; height: 14px; margin: 11px 0 0 13px; border-radius: 7px; background: #999; }
.toggle i { display: block; width: 24px; height: 24px; border-radius: 50%; background: #fafafa; box-shadow: 0 1px 3px rgba(0,0,0,.4); transform: translate(-14px, -5px); }
.field { padding-top: 19px; }
.value { height: 34px; margin-top: 1px; border-bottom: 1.5px solid #8c8c8c; font-size: 16.5px; line-height: 28px; color: #1e1e1e; display: flex; justify-content: space-between; letter-spacing: -.4px; padding-top: 2px; }
.value.up { padding-top: 1px; }
.w-date .value { width: 218px; letter-spacing: -.33px; }
.w-last .value { width: 146px; }
.w-res .value { width: 134px; }
.w-top .value { width: 186px; }
.w-search .value { width: 170px; }
.dt { fill: none; stroke: #8a8f98; stroke-width: 1.3; margin: 3px 3px 0 0; }
.dt .fill { fill: #8a8f98; stroke: none; }
.small { border-left-width: 4.5px; border-right-width: 4.5px; border-top: 6px solid #8a8a8a; margin: 11px 7px 0 0; }
.spin { fill: #8a8a8a; margin: 5px 2px 0 0; }
.apply { width: 72px; height: 35px; margin-top: 38px; border: 0; border-radius: 3px; background: #fff; box-shadow: 0 1px 4px rgba(0,0,0,.38); font: 15px/33px Lato, sans-serif; color: #222; padding: 0 0 2px; letter-spacing: -.5px; }

.board { flex: 1; padding: 15px 16px 0 16px; box-shadow: 0 0 22px rgba(0,0,0,.09); font-family: Roboto, sans-serif; min-height: 0; }
.toolbar { height: 47px; background: #e5e5e5; border-bottom: 1px solid #d2d2d2; display: flex; justify-content: space-between; }
.group { display: flex; align-items: center; background: #f1f1f1; }
.first { width: 270px; gap: 29.8px; padding-left: 15px; border-right: 1px solid #d2d2d2; }
.last { width: 224px; border-left: 1px solid #d2d2d2; padding-left: 13px; }
.dk { fill: #404040; }
.st { fill: none; stroke: #404040; stroke-width: 1.7; }
.st.wide { stroke-width: 2.6; }
.st.thin { stroke-width: 1.3; }
.off { opacity: .32; }
.dark { border-top-color: #404040; margin-left: 10px; }
.sel { margin-left: 33px; }
.last b { font-size: 16.5px; color: #404040; margin-left: 23px; padding-top: 2px; letter-spacing: -.15px; }
.tabs { height: 41px; display: flex; background: #f1f1f1; }
.tabs span { padding: 0 20.200px 0 20px; font-size: 17px; line-height: 40px; color: #8c8c8c; letter-spacing: -.15px; }
.tabs span:first-child { letter-spacing: 0; }
.tabs .on { background: #e4e4e4; }
.caption { margin: 0; padding: 7px 0 0 18.500px; height: 43px; font-size: 17px; line-height: 20px; color: #b3b3b3; letter-spacing: .18px; }
.caption span { font-family: Inter, sans-serif; font-feature-settings: "zero"; font-size: 16.500px; letter-spacing: .6px; }
.split { display: flex; padding-left: 12px; }
.data { width: 1520px; flex: none; }
.map { display: block; }
.donuts { display: block; margin-top: -6px; }

.ice { fill: #fff; }
.sand, .beige { fill: #ece9cb; }
.veg { fill: #dae6c2; }
.pale { fill: #e4ecdc; }
.sandy { fill: #eff0e2; }
.snow { fill: #f6f6f5; }
.cream { fill: #fffce4; }
.blue path { fill: #4477aa; stroke: #75797e; stroke-width: 4.5; stroke-linejoin: round; }
.border path { fill: none; stroke: #75797e; stroke-width: 4.5; }
.strait { fill: none; stroke: #badcf8; stroke-width: 6; }
.sea { stroke-width: 14; }
.scale, .osm { font: 15px Roboto, sans-serif; fill: #222; paint-order: stroke; stroke: #fff; stroke-width: 3; }
.scale { font-size: 16px; }
.link { text-decoration: underline; }
.bar { fill: none; stroke: #333; stroke-width: 1.6; }
.bar2 { stroke: #888; stroke-width: 1.6; }

.table { margin-top: 12px; border-top: 1px solid #e6e6e6; color: #595959; }
.tr { display: grid; grid-template-columns: 163px 181px 216px 154px 165px 177px 104px 68px 1fr; }
.td { border-right: 1px solid #e2e2e2; padding-left: 6px; white-space: nowrap; position: relative; }
.td:last-child { border-right: 0; }
.head { height: 65px; border-bottom: 1.500px solid #bfbfbf; font-size: 17px; }
.head .td { display: flex; justify-content: space-between; align-items: flex-end; padding-bottom: 6px; }
.names { display: flex; flex-direction: column; line-height: 26px; letter-spacing: -.1px; }
.mag { fill: none; stroke: #4c4c4c; stroke-width: 1.7; margin: 0 11px 15px 0; flex: none; }
.end { text-align: right; padding-right: 9px; padding-left: 0; }
.head .end { padding-right: 0; }
.head .end .names { margin-left: auto; }
.head .end.plain .names { margin-right: 12px; }
.end .mag { margin-left: 25px; }
.sort { position: absolute; right: 37px; top: 64px; border-left: 7px solid transparent; border-right: 7px solid transparent; border-top: 9px solid #7a7a7a; }
.total { height: 33.500px; border-bottom: 1.500px solid #999; font-size: 15px; font-weight: 700; line-height: 33px; }
.rows { height: 131.500px; overflow: hidden; position: relative; }
.row { height: 29px; border-bottom: 1.500px solid #ededed; font-size: 15px; line-height: 27px; }
.row .td { height: 29px; }
.num { font-family: Inter, sans-serif; font-feature-settings: "zero"; }
.row .num { font-size: 14.500px; letter-spacing: -.45px; }
.row .ip { letter-spacing: .2px; }
.none { background: #f1f1f1; padding-left: 5px; }
.wide { letter-spacing: -.1px; }
.thumb { position: absolute; right: 0; top: 2px; width: 2px; height: 60px; background: #aaa; border-radius: 1px; }

.donuts text { font-family: Roboto, sans-serif; }
.donuts text.num { font-family: Inter, sans-serif; }
.lab { font-size: 17px; fill: #404040; }
.lab.num { font-size: 16.500px; }
.val { font-size: 15.500px; fill: #595959; }
.val.light { fill: #fff; font-weight: 500; }
.ttl { font-size: 18px; fill: #4a4a4a; }
.leg { font-size: 16.500px; fill: #595959; }
.leg.num { font-size: 16px; }
</style>
